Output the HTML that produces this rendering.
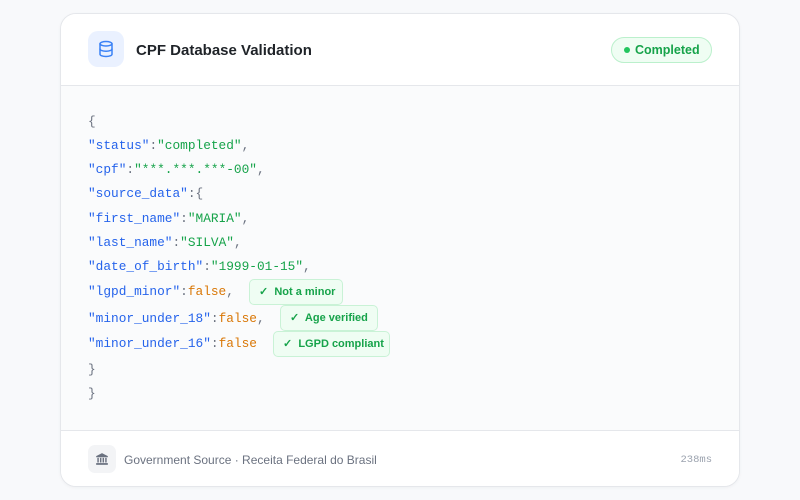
<!DOCTYPE html>
<html><head><meta charset="utf-8"><style>
*{margin:0;padding:0;box-sizing:border-box}
body{width:800px;height:500px;background:#f8f9fb;font-family:"Liberation Sans",sans-serif;position:relative;overflow:hidden}
.card{position:absolute;left:60px;top:13px;width:680px;height:474px;background:#fff;border:1px solid #e5e7eb;border-radius:16px;overflow:hidden;box-shadow:0 1px 3px rgba(0,0,0,.04)}
.hdr{position:absolute;left:0;top:0;width:100%;height:72px;border-bottom:1px solid #e5e7eb;background:#fff}
.ic{position:absolute;left:27px;top:17px;width:36px;height:36px;border-radius:10px;background:#eaf1ff;display:flex;align-items:center;justify-content:center}
.title{position:absolute;left:75px;top:28px;font-size:15px;font-weight:bold;color:#1f2328}
.pill{position:absolute;left:550px;top:23px;width:101px;height:26px;border:1px solid #bbf0cc;background:#effdf3;border-radius:13px;color:#16a34a;font-size:12.5px;font-weight:bold;line-height:24px;padding-left:23px}
.pill:before{content:"";position:absolute;left:12px;top:9px;width:6px;height:6px;border-radius:50%;background:#22c55e}
.body{position:absolute;left:0;top:72px;width:100%;height:344px;background:#fafbfc}
.ln{position:absolute;left:27px;font-family:"Liberation Mono",monospace;font-size:12.8px;color:#6b7280;white-space:pre;line-height:16px}
.k{color:#2563eb}.s{color:#16a34a}.b{color:#d97706}
.tag{position:absolute;height:26px;border:1px solid #c9f2d6;background:#effdf3;border-radius:5px;color:#16a34a;font-size:11px;font-weight:bold;line-height:24px;padding-left:9px;font-family:"Liberation Sans",sans-serif}
.ftr{position:absolute;left:0;top:416px;width:100%;height:58px;border-top:1px solid #e5e7eb;background:#fff}
.fi{position:absolute;left:27px;top:14px;width:28px;height:28px;border-radius:7px;background:#f3f4f6;display:flex;align-items:center;justify-content:center}
.ft{position:absolute;left:63px;top:22px;font-size:12px;color:#6b7280}
.ms{position:absolute;right:27px;top:23px;font-family:"Liberation Mono",monospace;font-size:10.5px;color:#9ca3af}
</style></head><body>
<div class="card">
 <div class="hdr">
  <div class="ic"><svg width="18" height="18" viewBox="0 0 24 24" fill="none" stroke="#3b82f6" stroke-width="2" stroke-linecap="round"><ellipse cx="12" cy="5" rx="8" ry="3"/><path d="M4 5v14c0 1.7 3.6 3 8 3s8-1.3 8-3V5"/><path d="M4 12c0 1.7 3.6 3 8 3s8-1.3 8-3"/></svg></div>
  <div class="title">CPF Database Validation</div>
  <div class="pill">Completed</div>
 </div>
 <div class="body">
  <div class="ln" style="top:28px">{</div>
  <div class="ln" style="top:52px"><span class="k">"status"</span>:<span class="s">"completed"</span>,</div>
  <div class="ln" style="top:76px"><span class="k">"cpf"</span>:<span class="s">"***.***.***-00"</span>,</div>
  <div class="ln" style="top:100px"><span class="k">"source_data"</span>:{</div>
  <div class="ln" style="top:125px"><span class="k">"first_name"</span>:<span class="s">"MARIA"</span>,</div>
  <div class="ln" style="top:149px"><span class="k">"last_name"</span>:<span class="s">"SILVA"</span>,</div>
  <div class="ln" style="top:173px"><span class="k">"date_of_birth"</span>:<span class="s">"1999-01-15"</span>,</div>
  <div class="ln" style="top:198px"><span class="k">"lgpd_minor"</span>:<span class="b">false</span>,</div>
  <div class="tag" style="left:188px;top:193px;width:94px">✓&nbsp; Not a minor</div>
  <div class="ln" style="top:225px"><span class="k">"minor_under_18"</span>:<span class="b">false</span>,</div>
  <div class="tag" style="left:219px;top:219px;width:98px">✓&nbsp; Age verified</div>
  <div class="ln" style="top:250px"><span class="k">"minor_under_16"</span>:<span class="b">false</span></div>
  <div class="tag" style="left:212px;top:245px;width:117px">✓&nbsp; LGPD compliant</div>
  <div class="ln" style="top:276px">}</div>
  <div class="ln" style="top:300px">}</div>
 </div>
 <div class="ftr">
  <div class="fi"><svg width="14" height="14" viewBox="0 0 24 24" fill="#6b7280"><path d="M12 2L2 7v2h20V7z"/><rect x="4" y="10" width="2.5" height="8"/><rect x="8.5" y="10" width="2.5" height="8"/><rect x="13" y="10" width="2.5" height="8"/><rect x="17.5" y="10" width="2.5" height="8"/><rect x="2" y="19" width="20" height="3"/></svg></div>
  <div class="ft">Government Source · Receita Federal do Brasil</div>
  <div class="ms">238ms</div>
 </div>
</div>
</body></html>
